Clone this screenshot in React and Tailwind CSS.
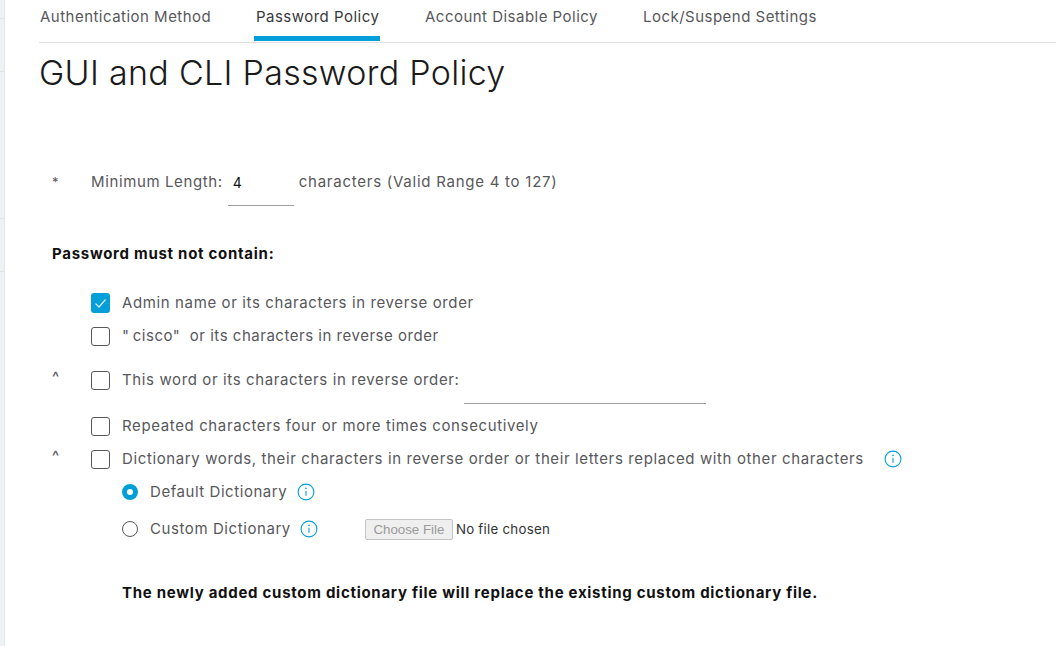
import React from "react";

const sans = "font-['Inter','Noto_Sans',sans-serif]";

function Check({ checked }) {
  if (checked) {
    return (
      <span className="w-[19px] h-5 rounded-[3px] bg-[#049fd9] flex items-center justify-center shrink-0">
        <svg width="13" height="11" viewBox="0 0 13 11" fill="none" stroke="#d5effa" strokeWidth="1.2">
          <path d="M1.5 5.5 L5 9 L11.5 1.5" />
        </svg>
      </span>
    );
  }
  return <span className="w-[19px] h-[19px] rounded-[3px] border border-[#58585b] bg-white shrink-0" />;
}

function Info() {
  return (
    <svg width="18" height="18" viewBox="0 0 18 18" fill="none" className="shrink-0">
      <circle cx="9" cy="9" r="7.9" stroke="#049fd9" strokeWidth="1.1" />
      <circle cx="9" cy="5.4" r="0.8" fill="#049fd9" />
      <path d="M9 7.8 V12.8" stroke="#049fd9" strokeWidth="1.1" />
    </svg>
  );
}

function Row({ mark, checked, className, children }) {
  return (
    <div className={"flex items-center " + className}>
      <span className="w-[39px] text-[15px] font-medium text-[#58585b] shrink-0 -translate-y-[3px]">{mark}</span>
      <Check checked={checked} />
      <span className="ml-[12px]">{children}</span>
    </div>
  );
}

export default function App() {
  return (
    <div className={"w-[1056px] h-[646px] overflow-hidden bg-white flex text-[15px] tracking-[0.62px] text-[#58585b] " + sans}>
      {/* collapsed side nav */}
      <div className="w-[5px] h-full bg-[#f0f1f3] border-r border-[#e4e5e8] shrink-0 flex flex-col">
        <div className="h-[19px] border-b border-[#e2e3e6]" />
        <div className="h-[53px] border-b border-[#e2e3e6]" />
        <div className="h-[147px] border-b border-[#e2e3e6]" />
        <div className="h-[53px] border-b border-[#e2e3e6]" />
      </div>

      <div className="flex-1 pl-[34px]">
        {/* tabs */}
        <div className="h-[43px] border-b border-[#dfdfdf] flex whitespace-nowrap tracking-[0.48px]">
          <div className="pl-[1px] pt-[6px] w-[215px]">Authentication Method</div>
          <div className="h-[41px] w-[126px] pt-[6px] pl-[2px] border-b-[5px] border-[#049fd9] text-[#39393b]">Password Policy</div>
          <div className="pl-[45px] pt-[6px] w-[263px]">Account Disable Policy</div>
          <div className="pt-[6px]">Lock/Suspend Settings</div>
        </div>

        <h1 className="mt-[7px] text-[34px] leading-[46px] font-light tracking-[0.3px] text-[#1a1a1a]">GUI and CLI Password Policy</h1>

        <div className="pl-[13px]">
          <div className="mt-[66px] flex items-start h-[44px] leading-[40px]">
            <span className="w-[39px] text-[13px]">*</span>
            <span>Minimum Length:</span>
            <span className="ml-[5px] w-[66px] h-[44px] border-b border-[#a0a0a0] pl-[5px] leading-[42px] text-[14px] text-[#111]">4</span>
            <span className="ml-[5px] tracking-[0.75px]">characters (Valid Range 4 to 127)</span>
          </div>

          <div className="mt-[38px] text-[15px] leading-5 font-bold tracking-[0.72px] text-[#111]">Password must not contain:</div>

          <Row checked className="mt-[29px] h-5">Admin name or its characters in reverse order</Row>
          <Row className="mt-[13px] h-5"><span className="tracking-[0.52px]">"&thinsp;cisco"&nbsp; or its characters in reverse order</span></Row>
          <Row mark="^" className="mt-6 h-5">
            <span className="flex items-center">
              This word or its characters in reverse order:
              <span className="ml-[5px] w-[242px] h-[44px] -my-3 border-b border-[#a0a0a0] inline-block translate-y-[2px]" />
            </span>
          </Row>
          <Row className="mt-[26px] h-5">Repeated characters four or more times consecutively</Row>
          <Row mark="^" className="mt-[13px] h-5">
            <span className="flex items-center">
              Dictionary words, their characters in reverse order or their letters replaced with other characters
              <span className="ml-[20px]"><Info /></span>
            </span>
          </Row>

          <div className="ml-[70px] mt-[13px] flex items-center h-5">
            <span className="w-4 h-4 rounded-full border-[5px] border-[#049fd9] bg-white" />
            <span className="ml-[12px] tracking-[0.55px]">Default Dictionary</span>
            <span className="ml-[10px]"><Info /></span>
          </div>
          <div className="ml-[70px] mt-[17px] flex items-center h-5">
            <span className="w-4 h-4 rounded-full border border-[#58585b] bg-white" />
            <span className="ml-[12px] tracking-[0.58px]">Custom Dictionary</span>
            <span className="ml-[9px]"><Info /></span>
            <button className="ml-[47px] w-[88px] h-[21px] rounded-[2px] border border-[#c4c4c4] bg-[#efefef] pb-px text-[13.3px] tracking-normal text-[#9a9a9a] font-['Liberation_Sans',sans-serif]">Choose File</button>
            <span className="ml-[3px] pt-px text-[13.3px] tracking-[0.25px] text-[#333]">No file chosen</span>
          </div>

          <div className="ml-[70px] mt-[44px] text-[15px] leading-5 font-bold tracking-[0.72px] text-[#111]">The newly added custom dictionary file will replace the existing custom dictionary file.</div>
        </div>
      </div>
    </div>
  );
}
